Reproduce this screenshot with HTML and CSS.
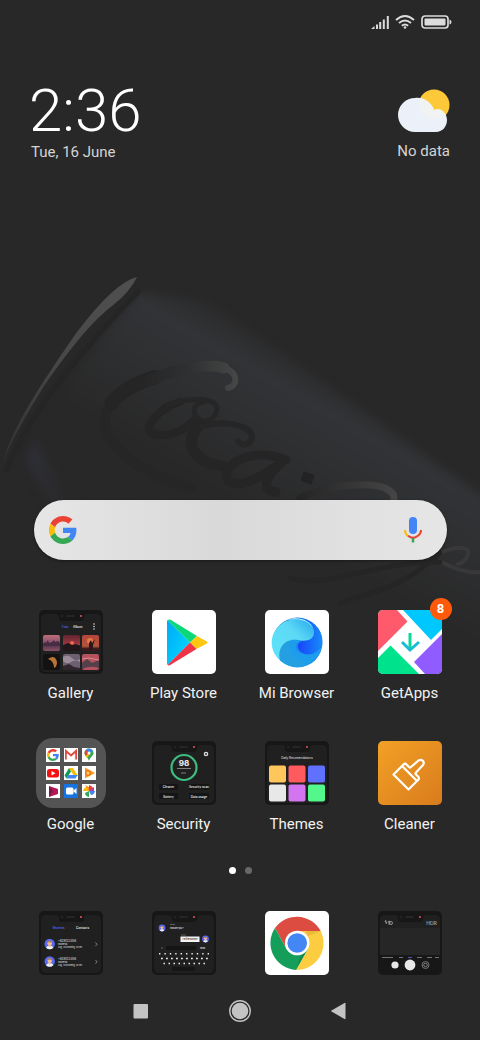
FILE: index.html
```html
<!DOCTYPE html>
<html lang="en">
<head>
<meta charset="utf-8">
<meta name="viewport" content="width=device-width, initial-scale=1">
<title>Home</title>
<link rel="stylesheet" href="styles.css">
</head>
<body>
<svg class="wallpaper" viewBox="0 0 480 1040" preserveAspectRatio="xMidYMid slice" aria-hidden="true">
  <defs>
    <linearGradient id="can" gradientUnits="userSpaceOnUse" x1="290" y1="340" x2="205" y2="485">
      <stop offset="0" stop-color="#292929"/><stop offset=".25" stop-color="#323336"/><stop offset=".5" stop-color="#2f3032"/><stop offset="1" stop-color="#282828"/>
    </linearGradient>
    <linearGradient id="rim" x1="0" y1="1" x2="1" y2="0">
      <stop offset="0" stop-color="#303136"/><stop offset=".5" stop-color="#484848"/><stop offset="1" stop-color="#505050"/>
    </linearGradient>
    <linearGradient id="swirl" gradientUnits="userSpaceOnUse" x1="140" y1="0" x2="236" y2="0">
      <stop offset="0" stop-color="#252526"/><stop offset=".5" stop-color="#2f3031"/><stop offset="1" stop-color="#464646"/>
    </linearGradient>
    <linearGradient id="swirl2" gradientUnits="userSpaceOnUse" x1="300" y1="0" x2="396" y2="0">
      <stop offset="0" stop-color="#252526"/><stop offset="1" stop-color="#454545"/>
    </linearGradient>
    <linearGradient id="edge" x1="0" y1="0" x2="1" y2="0">
      <stop offset="0" stop-color="#2f3037"/><stop offset="1" stop-color="#282828"/>
    </linearGradient>
    <filter id="soft" x="-10%" y="-10%" width="120%" height="120%" color-interpolation-filters="sRGB"><feGaussianBlur stdDeviation="4"/></filter>
    <filter id="haze" x="-10%" y="-10%" width="120%" height="120%" color-interpolation-filters="sRGB"><feGaussianBlur stdDeviation=".6"/></filter>
  </defs>
  <rect width="480" height="1040" fill="#282828"/>
  <path d="M140 292 L208 302 Q300 365 500 508 L500 760 L60 560 L28 440 Q80 360 140 292Z" fill="url(#can)" filter="url(#soft)"/>
  <path d="M25 460 L35 438 L70 500 L50 504Z" fill="url(#edge)" filter="url(#soft)"/>
  <path d="M3 462 C12 428 40 385 77 332 Q115 282 137 277 Q130 292 112 306 C85 327 61 362 44 386 C26 415 12 440 3 462Z" fill="url(#rim)"/>
  <path d="M6 472 C22 425 80 350 140 290" fill="none" stroke="#252525" stroke-width="5" filter="url(#haze)"/>
  <g fill="none" stroke-linecap="round" filter="url(#haze)">
    <path d="M190 488 C125 468 88 430 112 403" stroke="#262627" stroke-width="10"/>
    <path d="M112 403 C120 391 140 382 155 377" stroke="#252526" stroke-width="14"/>
    <path d="M145 382 C180 366 212 364 224 368" stroke="url(#swirl)" stroke-width="11"/>
    <path d="M220 367 C240 371 238 386 228 388" stroke="url(#swirl)" stroke-width="6"/>
    <path d="M180 402 C160 408 145 425 150 432 C162 440 184 432 194 420" stroke="#252526" stroke-width="8"/>
    <path d="M165 406 C185 398 214 396 217 408 C217 421 200 426 195 415 C192 407 198 402 204 402" stroke="#262627" stroke-width="5"/>
    <path d="M200 424 C180 445 198 464 222 466" stroke="#252526" stroke-width="11"/>
    <path d="M202 426 C225 420 252 425 252 438 C250 446 240 446 238 441" stroke="#262627" stroke-width="6"/>
    <path d="M286 460 C260 450 230 456 226 476 C232 494 262 478 284 460 C268 474 258 490 276 492" stroke="#252526" stroke-width="9"/>
    <path d="M302 476 L313 480" stroke="#232324" stroke-width="10" stroke-linecap="butt"/>
    <path d="M300 498 C330 484 370 482 385 488 Q395 493 394 499" stroke="url(#swirl2)" stroke-width="7"/>
    <path d="M440 553 C456 546 470 546 468 554 Q466 562 458 564 M440 561 C450 567 465 574 484 572" stroke="#383839" stroke-width="4"/>
    <path d="M290 578 C325 590 380 560 440 562 M340 603 C375 590 400 590 440 553" stroke="#252526" stroke-width="5"/>
  </g>
</svg>

<div class="home">
  <div class="status" role="img" aria-label="Signal, Wi-Fi and battery full">
    <svg width="18" height="13" viewBox="0 0 18 13" fill="#dcdcdc"><path d="M0 13 L3.500 10 V13Z M5 8.500 h2 V13 h-2Z M8.200 6 h2 V13 h-2Z M11.800 3.500 h2 V13 h-2Z M15.800 0 h2 V13 h-2Z"/></svg>
    <svg width="20" height="14" viewBox="0 0 20 14" fill="none" stroke="#dcdcdc" stroke-width="1.900"><path d="M1 5 Q10 -3 19 5 M4 8 Q10 3 16 8 M6.800 10.800 Q10 8 13.200 10.800"/><circle cx="10" cy="12.500" r="1.300" fill="#dcdcdc" stroke="none"/></svg>
    <svg width="31" height="14" viewBox="0 0 31 14"><rect x="1" y="1" width="26" height="12" rx="3" fill="none" stroke="#dcdcdc" stroke-width="1.700"/><rect x="3.500" y="3.500" width="21" height="7" rx="1" fill="#dcdcdc"/><path d="M28.500 4.500 Q30.500 5 30.500 7 T28.500 9.500Z" fill="#dcdcdc"/></svg>
  </div>

  <header class="widgets">
    <div class="clock">
      <time class="time">2:36</time>
      <span class="date">Tue, 16 June</span>
    </div>
    <div class="weather">
      <svg width="52" height="44" viewBox="0 0 52 44" aria-hidden="true"><circle cx="36" cy="16" r="15.500" fill="#fdc938"/><path d="M17 43 A17 17 0 1 1 17 9 C26 8 33 13 36 21 C44 18 49 25 49 31 C49 38 44 43 38 43Z" fill="#ecf1f9"/><path d="M21 9.300 C29 11 34 15 36 21 Q40 19.500 44 21.500 Q46 23 47 26 A15.500 15.500 0 0 1 21 16Z" fill="#f0f2f3"/></svg>
      <span>No data</span>
    </div>
  </header>

  <form class="search">
    <svg width="28" height="28" viewBox="0 0 48 48" aria-hidden="true"><use href="#g"/></svg>
    <input type="text" aria-label="Search">
    <button type="button" class="mic" aria-label="Voice search">
      <svg width="18" height="26" viewBox="0 0 18 26" fill="none" stroke-width="2"><rect x="5" y="0" width="8" height="17" rx="4" fill="#4285f4"/><path d="M1 13 Q1 17 4 19" stroke="#fbbc05"/><path d="M4 18.800 Q9 23 14 18.800 Q17 16.500 17 13" stroke="#ea4335"/><path d="M9 21 V25.500" stroke="#34a853" stroke-width="2.500"/></svg>
    </button>
  </form>

  <main class="apps">
    <button class="app" type="button">
      <svg class="icon" viewBox="0 0 64 64" aria-hidden="true">
        <defs>
          <g id="g"><path fill="#ea4335" d="M24 9.500c3.500 0 6.700 1.200 9.200 3.600l6.900-6.900C35.900 2.400 30.500 0 24 0 14.600 0 6.500 5.400 2.600 13.200l8 6.200C12.400 13.700 17.700 9.500 24 9.500z"/><path fill="#4285f4" d="M47 24.500c0-1.600-.2-3.100-.4-4.500H24v9h12.900c-.6 3-2.200 5.500-4.700 7.200l7.700 6C44.400 38 47 31.800 47 24.500z"/><path fill="#fbbc05" d="M10.500 28.600A14.500 14.500 0 0 1 10.500 19.400l-8-6.200a24 24 0 0 0 0 21.600z"/><path fill="#34a853" d="M24 48c6.500 0 11.900-2.100 15.900-5.800l-7.700-6c-2.200 1.500-4.900 2.300-8.200 2.300-6.300 0-11.600-4.200-13.500-9.900l-8 6.200C6.500 42.600 14.600 48 24 48z"/></g>
          <g id="phone"><rect width="64" height="64" rx="5" fill="#171717"/><path d="M7 4 H17 Q20 4 20 8 Q20 11 24 11 H41 Q45 11 45 8 Q45 4 48 4 H57 Q62 4 62 9 V57 Q62 62 57 62 H7 Q2 62 2 57 V9 Q2 4 7 4Z" fill="#202021"/><rect x="27" y="5" width="9" height="2" rx="1" fill="#252525"/><circle cx="23" cy="6" r="1.500" fill="#222"/><circle cx="42" cy="6" r="1" fill="#f0525a"/></g>
          <linearGradient id="sunset" x2="0" y2="1"><stop stop-color="#c06d79"/><stop offset=".5" stop-color="#85506d"/><stop offset=".6" stop-color="#50314a"/><stop offset="1" stop-color="#8a5369"/></linearGradient>
          <linearGradient id="dusk" x2="0" y2="1"><stop stop-color="#60252d"/><stop offset=".6" stop-color="#a13843"/><stop offset=".7" stop-color="#221618"/></linearGradient>
          <linearGradient id="ember" x2="0" y2="1"><stop stop-color="#b8453a"/><stop offset=".7" stop-color="#b0553f"/><stop offset=".85" stop-color="#3c191c"/></linearGradient>
        </defs>
        <use href="#phone"/>
        <text x="23" y="18" class="t3 blue">Foto</text><text x="34" y="18" class="t3">Album</text>
        <g fill="#ddd"><circle cx="55" cy="14" r=".8"/><circle cx="55" cy="16.500" r=".8"/><circle cx="55" cy="19" r=".8"/></g>
        <rect x="4" y="25" width="17" height="16" rx="2" fill="url(#sunset)"/><path d="M4 34 l2-2 1 1 2-3 1 3 3-1 2-2 1 2 3-1 2 2 v3 H4Z" fill="#482c43"/>
        <rect x="24" y="25" width="17" height="16" rx="2" fill="url(#dusk)"/><circle cx="33" cy="33" r="2" fill="#ec6750"/><path d="M24 35 l5-2 4 2 4-1 4 2 v3 H24Z" fill="#21171b"/>
        <rect x="43" y="25" width="17" height="16" rx="2" fill="url(#ember)"/><circle cx="51" cy="31" r="3" fill="#e97844"/><path d="M50 40 V33 l2-3 1 3 3-4-2 6 v5Z" fill="#29171b"/>
        <rect x="4" y="44" width="17" height="16" rx="2" fill="#141112"/><path d="M9 49 Q16 44 18 52 Q18 57 15 58 Q15 51 9 49Z" fill="#b87434"/>
        <rect x="24" y="44" width="17" height="16" rx="2" fill="#6c6071"/><path d="M24 47 q5-3 9 1 t8 1 v3 q-5-3-9 0 t-8-1Z" fill="#9b8b99"/><path d="M24 56 l6-2 5 3 6 1 v2 H24Z" fill="#30272e"/>
        <rect x="43" y="44" width="17" height="16" rx="2" fill="#b55260"/><path d="M43 53 l5-4 5 4 7-3 v8 q-8-3-17 1Z" fill="#54404a"/><path d="M43 49 l7-1 10 2" stroke="#da8b89" fill="none"/>
      </svg>
      <span>Gallery</span>
    </button>
    <button class="app" type="button">
      <svg class="icon" viewBox="0 0 64 64" aria-hidden="true">
        <defs><linearGradient id="pb" x2="1" y2="1"><stop stop-color="#00a9f5"/><stop offset="1" stop-color="#00dcff"/></linearGradient></defs>
        <rect width="64" height="64" rx="5" fill="#fff"/>
        <path d="M15.500 10 L38 32.500 L15.500 55 Q15 54 15 53 V12 Q15 11 15.500 10Z" fill="url(#pb)"/>
        <path d="M15.500 10 Q17 9 19 10 L45 26 L38 32.500Z" fill="#0cd779"/>
        <path d="M45 26 L54 31 Q57 32.500 54 34 L44.500 39 L38 32.500Z" fill="#fdc814"/>
        <path d="M38 32.500 L44.500 39 L19 54.500 Q17 56 15.500 55Z" fill="#ed3448"/>
      </svg>
      <span>Play Store</span>
    </button>
    <button class="app" type="button">
      <svg class="icon" viewBox="0 0 64 64" aria-hidden="true">
        <defs>
          <linearGradient id="mb1" x1="1" y1="0" x2="0" y2="1"><stop stop-color="#1479ec"/><stop offset=".5" stop-color="#1684ed"/><stop offset="1" stop-color="#2cc5fa"/></linearGradient>
          <linearGradient id="mb2" x1="0" y1="1" x2="1" y2="0"><stop stop-color="#5ce4fa"/><stop offset=".6" stop-color="#5ed9f5"/><stop offset="1" stop-color="#22a7ed"/></linearGradient>
          <linearGradient id="mb3" x1="0" x2="1"><stop stop-color="#1a43fb"/><stop offset="1" stop-color="#168cf8"/></linearGradient>
        </defs>
        <rect width="64" height="64" rx="5" fill="#fff"/>
        <circle cx="32.500" cy="32.500" r="25" fill="url(#mb1)"/>
        <path d="M15 50 C11 38 24 26 36 31 C27 34 30 45 42 44 C53 43 58 38 57 29 A25 25 0 0 1 15 50Z" fill="#1c9eec"/>
        <path d="M26 30 C21 42 32 52 43 54 A25 25 0 0 1 15 50 C12 40 17 32 26 30Z" fill="#249fe2"/>
        <path d="M39 9 C50 12 59 22 57 33 C55 45 40 48 34 40 C31 34 35 31 40 30 C50 29 52 16 39 9Z" fill="url(#mb3)"/>
        <path d="M15 50 C4 41 4 24 15 15 C26 5 47 8 49 21 C50 30 41 32 33 30 C20 28 12 38 15 50Z" fill="url(#mb2)"/>
        <path d="M22 10 C33 5 46 11 48 18 C43 10 33 8 22 10Z" fill="#b9f3fc"/>
      </svg>
      <span>Mi Browser</span>
    </button>
    <button class="app" type="button">
      <svg class="icon" viewBox="0 0 64 64" aria-hidden="true">
        <defs><clipPath id="tile"><rect width="64" height="64" rx="5"/></clipPath></defs>
        <g clip-path="url(#tile)"><rect width="64" height="64" fill="#fff"/><path d="M0 0 H19 L29.500 11.500 L0 41Z" fill="#ff5a6b"/><path d="M25 0 H64 V19 L53 30Z" fill="#00c8ff"/><path d="M64 24 L36 52 L47 64 H64Z" fill="#905cff"/><path d="M0 48 L12.500 35.500 L41 64 H0Z" fill="#00e38c"/></g>
        <path d="M32 23 V39" stroke="#08d99b" stroke-width="3"/><path d="M24 32 L32 40 L41 32" fill="none" stroke="#18bdd5" stroke-width="3"/>
      </svg>
      <b class="badge">8</b>
      <span>GetApps</span>
    </button>

    <button class="app" type="button">
      <svg class="icon" viewBox="0 0 64 64" aria-hidden="true">
        <rect x="-3" y="-3" width="70" height="70" rx="17" fill="#545454"/>
        <g fill="#fff"><path d="M7 7h14v14H7Z M25 7h14v14H25Z M43 7h14v14H43Z M7 25h14v14H7Z M25 25h14v14H25Z M43 25h14v14H43Z M7 43h14v14H7Z M43 43h14v14H43Z"/></g>
        <svg x="8" y="8" width="12" height="12" viewBox="0 0 48 48"><use href="#g"/></svg>
        <path d="M27 18.500 V10 L32 14.500 L37 10 V18.500" fill="none" stroke="#e04a3f" stroke-width="2"/><path d="M28 18.500 V13 M36 18.500 V13" stroke="#d9dce0" stroke-width=".7"/>
        <path d="M50 20 C49 16 45.500 15 45.500 12 A4.500 4.500 0 0 1 54.500 12 C54.500 15 51 16 50 20Z" fill="#34a853"/><path d="M45.500 12 A4.500 4.500 0 0 1 47 8.800 L50 12 L46.500 15Z" fill="#ea4335"/><path d="M47 8.800 A4.500 4.500 0 0 1 54 10 L50 12Z" fill="#4285f4"/><path d="M46.500 15 L50 12 L51 13 L48 17Z" fill="#fbbc05"/><circle cx="50" cy="12" r="1.500" fill="#fff"/>
        <rect x="8" y="28" width="12" height="8.500" rx="2.500" fill="#f31212"/><path d="M12.500 30 L16.500 32.200 L12.500 34.500Z" fill="#fff"/>
        <path d="M30 27 h4 l5 8 h-4Z" fill="#fbbc05"/><path d="M30 27 l2 3.500 -4.500 7 -2-3Z" fill="#159957"/><path d="M29.500 34 H38.500 L36.500 37.500 H27.500Z" fill="#4285f4"/>
        <path d="M46 26.500 L56 32 L46 37.500Z" fill="#fb9d19"/><circle cx="49" cy="32" r="3" fill="#ee7623"/><circle cx="49" cy="32" r="1.500" fill="#ffd84a"/>
        <path d="M10 45 L19 48 V53 L10 56Z" fill="#b31957"/><path d="M10 45 L14 50 L10 56Z" fill="#7d1746"/>
        <rect x="25" y="43" width="14" height="14" fill="#1773df"/><rect x="27" y="46.500" width="7.500" height="7" rx="1.500" fill="#fff"/><path d="M34 50 L37.500 47 V53Z" fill="#fff"/>
        <path d="M50 50 V44 Q54 45 54 48Z" fill="#ea4335"/><path d="M50 50 H56 Q55 54 52 54Z" fill="#4285f4"/><path d="M50 50 V56 Q46 55 46 52Z" fill="#34a853"/><path d="M50 50 H44 Q45 46 48 46Z" fill="#fbbc05"/><path d="M50 50 L46 44 L50 46Z" fill="#fb8c2b"/><path d="M50 50 L55 46 V50Z" fill="#b93ca2"/>
      </svg>
      <span>Google</span>
    </button>
    <button class="app" type="button">
      <svg class="icon" viewBox="0 0 64 64" aria-hidden="true">
        <use href="#phone"/>
        <circle cx="32" cy="26.500" r="12.500" fill="none" stroke="#3ebd7f" stroke-width="2.200"/>
        <text x="32" y="25" class="t9 mid">98</text><path d="M25 27.500 H39 M29 32 H34" stroke="#aaa" stroke-width=".7"/>
        <circle cx="54" cy="13" r="1.600" fill="none" stroke="#ddd" stroke-width="1.400"/>
        <g fill="#151515"><rect x="7" y="43" width="19" height="6" rx="1"/><rect x="37" y="43" width="20" height="6" rx="1"/><rect x="7" y="52" width="19" height="6" rx="1"/><rect x="37" y="52" width="20" height="6" rx="1"/></g>
        <text x="16.500" y="47" class="t3 mid">Cleaner</text><text x="47" y="47" class="t3 mid">Security scan</text><text x="16.500" y="56.500" class="t3 mid">Battery</text><text x="47" y="56.500" class="t3 mid">Data usage</text>
      </svg>
      <span>Security</span>
    </button>
    <button class="app" type="button">
      <svg class="icon" viewBox="0 0 64 64" aria-hidden="true">
        <use href="#phone"/><text x="32" y="18" class="t3 thin mid">Daily Recomendations</text>
        <rect x="4" y="24.500" width="17" height="17" rx="2" fill="#ffc65c"/><rect x="23.500" y="24.500" width="17" height="17" rx="2" fill="#ff5b5f"/><rect x="43" y="24.500" width="17" height="17" rx="2" fill="#6071ff"/>
        <rect x="4" y="43.500" width="17" height="17" rx="2" fill="#e8e8e8"/><rect x="23.500" y="43.500" width="17" height="17" rx="2" fill="#d375f0"/><rect x="43" y="43.500" width="17" height="17" rx="2" fill="#54f78c"/>
      </svg>
      <span>Themes</span>
    </button>
    <button class="app" type="button">
      <svg class="icon" viewBox="0 0 64 64" aria-hidden="true">
        <defs><linearGradient id="or" x2="1" y2="1"><stop stop-color="#f2a126"/><stop offset="1" stop-color="#d97b1c"/></linearGradient></defs>
        <rect width="64" height="64" rx="5" fill="url(#or)"/>
        <path d="M24 25 L15.500 33.500 L30.500 48.500 L39 40Z M24 25 L25.500 23.500 Q27 22 28.500 23.500 L31 26 Q32 27 33 26 L40.500 19.500 Q43 18 45 20 Q46.500 22 45 24 L38 31.500 Q37 32.500 38 33.500 L40 35.500 Q42 37.500 40 39 L39 40" fill="none" stroke="#fff" stroke-width="2.200" stroke-linejoin="round"/>
      </svg>
      <span>Cleaner</span>
    </button>
  </main>

  <div class="dots" aria-hidden="true"><i class="dot on"></i><i class="dot"></i></div>

  <section class="dock" aria-label="Dock">
    <button class="app" type="button" aria-label="Phone">
      <svg class="icon" viewBox="0 0 64 64" aria-hidden="true">
        <defs><g id="person"><circle r="5.200" fill="#5668f5"/><path d="M-3.500 4 Q-3 1.500 0 1.500 T3.500 4 Q0 6.500 -3.500 4Z" fill="#f2f2f2"/><circle cy="-.7" r="2.300" fill="#f0bd8c"/><path d="M-2.500 -1 Q-2.500 -3.600 0 -3.600 T2.500 -1 Q0 -2.500 -2.500 -1Z" fill="#a9825a"/><path d="M-1 1 h2 v1.500 l-1 .7 -1-.7Z" fill="#f0bd8c"/></g></defs>
        <use href="#phone"/><text x="19.500" y="18" class="t3 mid blue">Recents</text><text x="43.500" y="18" class="t3 mid">Contacts</text>
        <use href="#person" x="10.700" y="33"/><use href="#person" x="10.700" y="50.500"/>
        <text x="19" y="31" class="t3 thin">+628123456</text><text x="19" y="34" class="t2 thin">Indonesia</text><text x="19" y="37" class="t2 thin">Aug, 20 Incoming, 20 sec</text>
        <text x="19" y="48.500" class="t3 thin">+628123456</text><text x="19" y="51.500" class="t2 thin">Indonesia</text><text x="19" y="54.500" class="t2 thin">Aug, 20 Incoming, 20 sec</text>
        <path d="M56.500 31.500 l1.500 1.800 -1.500 1.800 M56.500 49 l1.500 1.800 -1.500 1.800" fill="none" stroke="#999" stroke-width=".8"/>
      </svg>
    </button>
    <button class="app" type="button" aria-label="Messages">
      <svg class="icon" viewBox="0 0 64 64" aria-hidden="true">
        <use href="#phone"/>
        <use href="#person" transform="translate(10 17) scale(.65)"/><use href="#person" transform="translate(53.500 28) scale(.65)"/>
        <path d="M18 13.500 h5 M29 24 h5" stroke="#888" stroke-width=".6"/>
        <text x="18" y="18" class="t2">How are you ?</text>
        <rect x="28.500" y="25.500" width="19" height="5.500" fill="#f3f3f3"/><text x="38" y="29.200" class="t2 mid dark">I'm fine brother</text>
        <rect x="14" y="35" width="30" height="4" rx="1" fill="#141414"/><circle cx="10" cy="37" r=".7" fill="#777"/><text x="48" y="38.200" class="t2">Send</text>
        <g stroke="#eee" stroke-width="1.500"><path d="M7 42.800 H58" stroke-dasharray="1.400 4"/><path d="M9 47.500 H56" stroke-dasharray="1.800 3.200"/><path d="M11.500 52.500 H53" stroke-dasharray="1.500 3.500"/></g>
        <rect x="20" y="56" width="23" height="4" rx="1" fill="#151515"/>
      </svg>
    </button>
    <button class="app" type="button" aria-label="Chrome">
      <svg class="icon" viewBox="0 0 64 64" aria-hidden="true">
        <rect width="64" height="64" rx="5" fill="#fff"/>
        <path d="M10 17 A27 27 0 0 1 55.700 20 L32 20 L21.500 38Z" fill="#dc4c40"/><path d="M55.700 20 A27 27 0 0 1 31 59 L43 38 L32 20Z" fill="#fdcd41"/><path d="M31 59 A27 27 0 0 1 10 17 L21.500 38 L43 38Z" fill="#159e5a"/>
        <path d="M41 20 H55.700 L43 25Z" fill="#dba531" opacity=".5"/><path d="M40 42 L31 59 L36 44Z" fill="#087443" opacity=".5"/>
        <circle cx="32.200" cy="32" r="12.300" fill="#fff"/><circle cx="32.200" cy="32" r="9.800" fill="#4387f4"/>
      </svg>
    </button>
    <button class="app" type="button" aria-label="Camera">
      <svg class="icon" viewBox="0 0 64 64" aria-hidden="true">
        <use href="#phone"/><rect x="2" y="17" width="60" height="27" fill="#262627"/><path d="M2 44 H62 V57 Q62 62 57 62 H7 Q2 62 2 57Z" fill="#171717"/>
        <path d="M8 9 L7 11 H9 L8 13 M11 10 V14 M10 11 L12 10" fill="none" stroke="#bbb" stroke-width=".7"/><circle cx="13" cy="12" r="1.500" fill="none" stroke="#bbb" stroke-width=".7"/><text x="53.500" y="13.500" class="t5 mid">HDR</text>
        <path d="M4 46.500 H15 M21 46.500 h4 M39 46.500 h5 M49 46.500 h5 M57 46.500 h4" stroke="#999" stroke-width=".7"/><path d="M30 46.500 h4" stroke="#5668f5" stroke-width=".8"/>
        <circle cx="17" cy="54" r="3.600" fill="#e8e8e8"/><circle cx="32" cy="54" r="5.400" fill="#e8e8e8"/><circle cx="47.500" cy="54" r="3.500" fill="none" stroke="#8a8a8a" stroke-width=".8"/><circle cx="47.500" cy="54" r="1.800" fill="none" stroke="#8a8a8a" stroke-width=".9"/>
      </svg>
    </button>
  </section>

  <nav class="nav" aria-label="System">
    <button type="button" aria-label="Recent apps"><svg width="24" height="24" viewBox="0 0 24 24"><rect x="4.500" y="5" width="14.500" height="14.500" rx="1" fill="#c3c3c3"/></svg></button>
    <button type="button" aria-label="Home"><svg width="24" height="24" viewBox="0 0 24 24"><circle cx="12" cy="12" r="10.300" fill="none" stroke="#c3c3c3" stroke-width="1.400"/><circle cx="12" cy="12" r="8.300" fill="#c3c3c3"/></svg></button>
    <button type="button" aria-label="Back"><svg width="24" height="24" viewBox="0 0 24 24"><path d="M18.500 4.500 V19.500 Q18.500 20.500 17.500 20 L4.500 12.500 Q4 12 4.500 11.500 L17.500 4 Q18.500 3.500 18.500 4.500Z" fill="#c3c3c3"/></svg></button>
  </nav>
</div>
</body>
</html>
```

FILE: styles.css
```css
* {
  box-sizing: border-box;
}

body {
  margin: 0;
  background: #282828;
  color: #f2f2f2;
  font-family: Roboto, "Noto Sans", sans-serif;
}

button {
  padding: 0;
  border: 0;
  background: none;
  color: inherit;
  font: inherit;
  cursor: pointer;
}

svg {
  display: block;
}

.wallpaper {
  position: absolute;
  inset: 0;
  width: 100%;
  height: 100%;
}

.home {
  position: relative;
  display: flex;
  flex-direction: column;
  min-height: 100vh;
}

.status {
  display: flex;
  justify-content: flex-end;
  align-items: center;
  gap: 6px;
  padding: 15px 28px 0 0;
}

.widgets {
  display: flex;
  justify-content: space-between;
  padding: 53px 30px 0 29px;
}

.clock {
  display: flex;
  flex-direction: column;
}

.time {
  height: 61px;
  color: #fff;
  font-size: 60px;
  font-weight: 300;
  line-height: 58px;
}

.date {
  padding-left: 2px;
}

.date,
.weather {
  color: #d4d4d4;
  font-size: 15px;
  line-height: 18px;
}

.weather {
  display: flex;
  flex-direction: column;
  align-items: flex-end;
  gap: 9px;
  padding-top: 7px;
}

.search {
  display: flex;
  align-items: center;
  height: 60px;
  margin: auto 33px 50px 34px;
  padding: 0 25px 0 15px;
  border-radius: 30px;
  background: linear-gradient(90deg, #e6e6e6, #d9d9d9 45%, #e6e6e6);
  box-shadow: 0 1px 3px #00000066;
}

.search input {
  flex: 1;
  min-width: 0;
  height: 100%;
  border: 0;
  outline: 0;
  background: none;
  font: inherit;
}

.apps,
.dock {
  display: grid;
  grid-template-columns: repeat(4, 1fr);
  row-gap: 38px;
  padding: 0 14px;
}

.app {
  position: relative;
  display: flex;
  flex-direction: column;
  align-items: center;
  gap: 9px;
  font-size: 15px;
  line-height: 20px;
}

.icon {
  width: 64px;
  height: 64px;
  overflow: visible;
}

.badge {
  position: absolute;
  top: -12px;
  left: calc(50% + 20px);
  width: 22px;
  height: 22px;
  border-radius: 50%;
  background: #ff5a0a;
  color: #fff;
  font-size: 13px;
  line-height: 22px;
}

.dots {
  display: flex;
  justify-content: center;
  gap: 9px;
  margin: 33px 0 37px;
}

.dot {
  width: 7px;
  height: 7px;
  border-radius: 50%;
  background: #686868;
}

.dot.on {
  background: #fff;
}

.nav {
  display: flex;
  justify-content: center;
  gap: 75px;
  padding: 24px 0 17px;
}

.t2,
.t3,
.t5,
.t9 {
  fill: #e6e6e6;
  font-family: Inter, sans-serif;
  font-weight: 600;
}

.t2 {
  font-size: 2px;
}

.t3 {
  font-size: 3px;
}

.t5 {
  font-size: 5px;
  font-weight: 300;
}

.t9 {
  font-size: 8px;
  font-weight: 800;
}

.thin {
  font-weight: 400;
}

.mid {
  text-anchor: middle;
}

.blue {
  fill: #5668f5;
}

.dark {
  fill: #222;
}
```
